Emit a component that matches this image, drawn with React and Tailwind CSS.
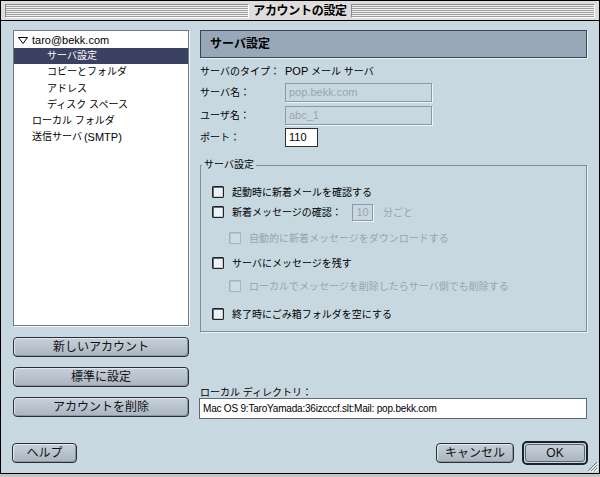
import React from "react";

const F = "font-['Liberation_Sans','Noto_Sans_CJK_JP',sans-serif]";

function Stripes() {
  return (
    <div className="flex-1 h-[14px] border border-t-[#8a8a8a] border-l-[#8a8a8a] border-b-white border-r-white bg-[repeating-linear-gradient(to_bottom,#f2f2f2_0px,#f2f2f2_1px,#9c9c9c_1px,#9c9c9c_2px)]" />
  );
}

function Check({ disabled }) {
  return disabled ? (
    <div className="w-[12px] h-[12px] shrink-0 rounded-[1px] border border-[#a7b3bd] bg-[#cddbe3] shadow-[inset_1px_1px_0_#bac6cf]" />
  ) : (
    <div className="w-[12px] h-[12px] shrink-0 rounded-[1px] border border-[#1d232a] bg-[#eef2f5] shadow-[inset_1px_1px_0_#5f6a74,inset_-1px_-1px_0_#c3ccd3]" />
  );
}

function MacButton({ children, className }) {
  return (
    <div
      className={
        "flex items-center justify-center rounded-[4px] border border-[#2b2f34] bg-[linear-gradient(to_bottom,#c7d0da,#aab5c1)] shadow-[inset_1px_1px_0_#e2e8ee,inset_-1px_-1px_0_#8894a0] text-[12px] text-[#111] " +
        className
      }
    >
      {children}
    </div>
  );
}

function ListRow({ children, selected, pl }) {
  return (
    <div
      className={
        "h-[16.2px] flex items-center text-[10px] leading-none " +
        (selected ? "bg-[#3b4161] text-white " : "text-black ") +
        pl
      }
    >
      {children}
    </div>
  );
}

export default function App() {
  return (
    <div className={"w-[600px] h-[477px] bg-[#c4c4c4] " + F}>
      <div className="relative w-[600px] h-[474px] border border-black flex flex-col bg-[#c8d8e0]">
        {/* title bar */}
        <div className="h-[20px] shrink-0 flex items-center px-[4px] gap-[4px] bg-[#dddddd] border-b border-black">
          <Stripes />
          <div className="text-[12px] font-bold leading-none text-black tracking-[-0.3px]">アカウントの設定</div>
          <Stripes />
        </div>

        {/* main */}
        <div className="flex pt-[9px] pl-[12px]">
          {/* left column */}
          <div className="w-[176px] flex flex-col">
            <div className="h-[296px] bg-white border border-[#6f7b86] shadow-[1px_1px_0_#f4f8fa] pt-[1px]">
              <ListRow pl="pl-[4px]">
                <svg width="10" height="7" viewBox="0 0 10 7" className="mr-[4px]">
                  <path d="M0.5 0.5 H9.5 L5 6.5 Z" fill="white" stroke="black" strokeWidth="1" />
                </svg>
                <span className="text-[11px]">taro@bekk.com</span>
              </ListRow>
              <ListRow selected pl="pl-[33px]">サーバ設定</ListRow>
              <ListRow pl="pl-[33px]">コピーとフォルダ</ListRow>
              <ListRow pl="pl-[33px]">アドレス</ListRow>
              <ListRow pl="pl-[33px]">ディスク スペース</ListRow>
              <ListRow pl="pl-[18px]">ローカル フォルダ</ListRow>
              <ListRow pl="pl-[18px]">
                送信サーバ <span className="text-[11px] ml-[2px]">(SMTP)</span>
              </ListRow>
            </div>
            <div className="mt-[11px] flex flex-col gap-[10px]">
              <MacButton className="h-[20px]">新しいアカウント</MacButton>
              <MacButton className="h-[20px]">標準に設定</MacButton>
              <MacButton className="h-[20px]">アカウントを削除</MacButton>
            </div>
          </div>

          {/* right column */}
          <div className="ml-[11px] w-[387px] flex flex-col">
            <div className="h-[28px] flex items-center pl-[9px] bg-[#98a8b8] border border-[#3d4652] shadow-[1px_1px_0_#eef3f6] text-[12px] font-bold text-black">
              サーバ設定
            </div>

            <div className="mt-[4px] h-[18px] flex items-center text-[10px] text-black">
              <div className="w-[85px]">サーバのタイプ：</div>
              <div>
                <span className="text-[11px]">POP</span> メール サーバ
              </div>
            </div>
            <div className="mt-[3px] h-[19px] flex items-center text-[10px] text-black">
              <div className="w-[85px]">サーバ名：</div>
              <div className="w-[147px] h-[19px] flex items-center pl-[3px] border border-[#8c99a5] shadow-[1px_1px_0_#f0f5f8] text-[11px] text-[#9ba5ae]">
                pop.bekk.com
              </div>
            </div>
            <div className="mt-[4px] h-[19px] flex items-center text-[10px] text-black">
              <div className="w-[85px]">ユーザ名：</div>
              <div className="w-[147px] h-[19px] flex items-center pl-[3px] border border-[#8c99a5] shadow-[1px_1px_0_#f0f5f8] text-[11px] text-[#9ba5ae]">
                abc_1
              </div>
            </div>
            <div className="mt-[3px] h-[19px] flex items-center text-[10px] text-black">
              <div className="w-[85px]">ポート：</div>
              <div className="w-[33px] h-[19px] flex items-center pl-[3px] bg-white border border-[#2a2f35] text-[11px] text-black">
                110
              </div>
            </div>

            <fieldset className="mt-[11px] border border-[#7f8d9a] shadow-[1px_1px_0_#eef3f6] pb-[9px]">
              <legend className="ml-[1px] px-[2px] text-[10px] leading-[14px] text-black">サーバ設定</legend>
              <div className="mt-[12px] h-[16px] flex items-center pl-[11px] gap-[8px] text-[10px] text-black">
                <Check />
                <span>起動時に新着メールを確認する</span>
              </div>
              <div className="mt-[4px] h-[16px] flex items-center pl-[11px] text-[10px] text-black">
                <Check />
                <span className="ml-[8px] w-[120px]">新着メッセージの確認：</span>
                <div className="w-[21px] h-[17px] flex items-center justify-center border border-[#8c99a5] shadow-[1px_1px_0_#f0f5f8] text-[11px] text-[#9ba5ae]">
                  10
                </div>
                <span className="ml-[10px] text-[#98a4ae]">分ごと</span>
              </div>
              <div className="mt-[10px] h-[16px] flex items-center pl-[28px] gap-[8px] text-[10px] text-[#98a4ae]">
                <Check disabled />
                <span>自動的に新着メッセージをダウンロードする</span>
              </div>
              <div className="mt-[9px] h-[16px] flex items-center pl-[11px] gap-[8px] text-[10px] text-black">
                <Check />
                <span>サーバにメッセージを残す</span>
              </div>
              <div className="mt-[7px] h-[16px] flex items-center pl-[28px] gap-[8px] text-[10px] text-[#98a4ae]">
                <Check disabled />
                <span>ローカルでメッセージを削除したらサーバ側でも削除する</span>
              </div>
              <div className="mt-[12px] h-[16px] flex items-center pl-[11px] gap-[8px] text-[10px] text-black">
                <Check />
                <span>終了時にごみ箱フォルダを空にする</span>
              </div>
            </fieldset>

            <div className="mt-[54px] h-[12px] flex items-center text-[10px] text-black">ローカル ディレクトリ：</div>
            <div className="-ml-[1px] h-[21px] flex items-center pl-[3px] bg-white border border-[#5d6873] text-[10px] text-black tracking-[-0.2px]">
              Mac OS 9:TaroYamada:36izcccf.slt:Mail: pop.bekk.com
            </div>
          </div>
        </div>

        {/* bottom row */}
        <div className="mt-[22px] h-[24px] flex items-center pl-[11px] pr-[11px]">
          <MacButton className="w-[65px] h-[20px]">ヘルプ</MacButton>
          <div className="flex-1" />
          <MacButton className="w-[78px] h-[20px]">キャンセル</MacButton>
          <div className="ml-[8px] w-[66px] h-[24px] rounded-[5px] border-2 border-[#1e2226] p-[1px] bg-[#c8d8e0]">
            <div className="w-full h-full flex items-center justify-center rounded-[3px] border border-[#5a646e] bg-[linear-gradient(to_bottom,#c7d0da,#aab5c1)] text-[12px] text-[#111]">
              OK
            </div>
          </div>
        </div>

        {/* resize grip */}
        <svg className="absolute right-[1px] bottom-[1px]" width="11" height="11" viewBox="0 0 11 11">
          <path d="M10 1 L1 10 M10 4 L4 10 M10 7 L7 10" stroke="#6d7983" strokeWidth="1" />
          <path d="M11 2 L2 11 M11 5 L5 11 M11 8 L8 11" stroke="#ffffff" strokeWidth="1" />
        </svg>
      </div>
    </div>
  );
}
